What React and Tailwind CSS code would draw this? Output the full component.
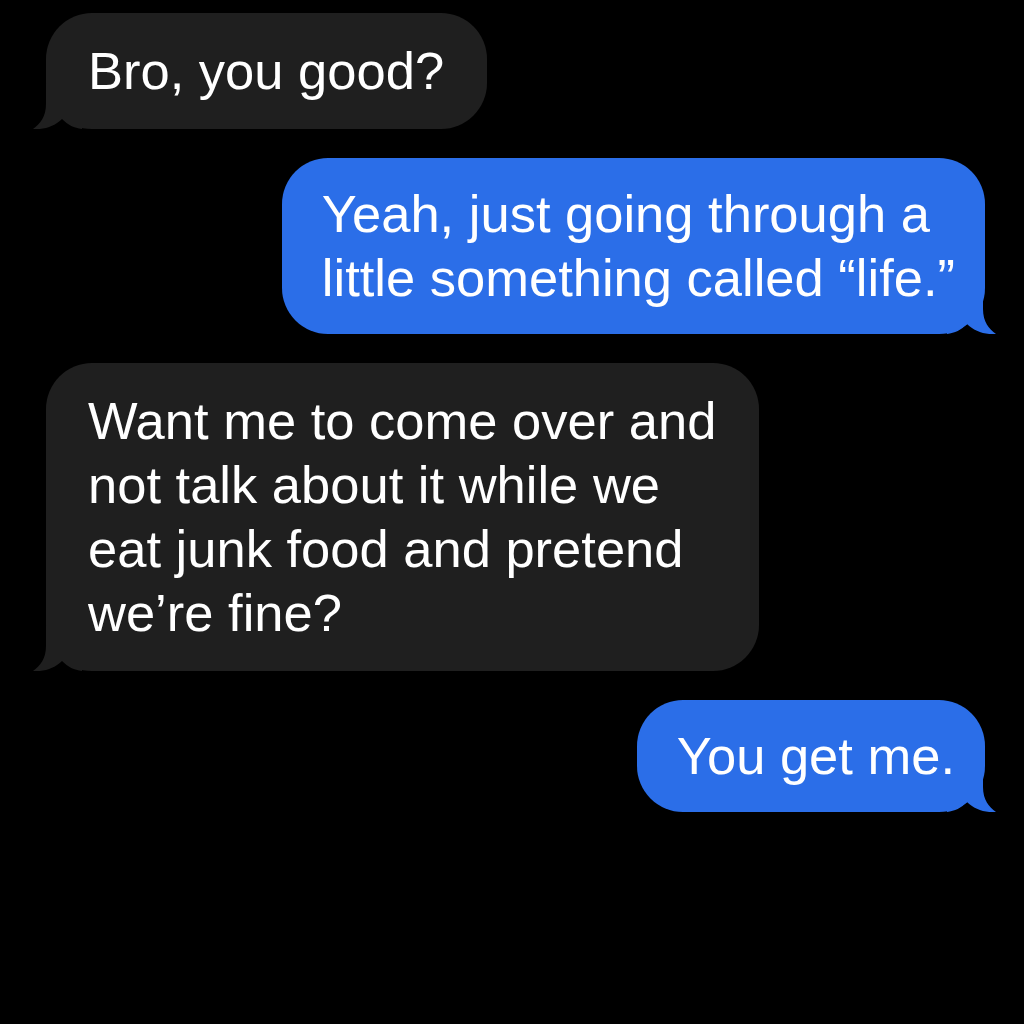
import React from 'react';

// ─── Messages ────────────────────────────────────────────────────────────────

const MESSAGES = [
  { from: 'them', lines: ['Bro, you good?'] },
  { from: 'me', lines: ['Yeah, just going through a', 'little something called \u201Clife.\u201D'] },
  {
    from: 'them',
    lines: [
      'Want me to come over and',
      'not talk about it while we',
      'eat junk food and pretend',
      'we\u2019re fine?',
    ],
  },
  { from: 'me', lines: ['You get me.'] },
];

// ─── Tail ────────────────────────────────────────────────────────────────────

function Tail({ color, mirrored }) {
  return (
    <svg
      width="50"
      height="45"
      viewBox="0 0 50 45"
      className={
        mirrored
          ? 'absolute -right-[12px] bottom-0 -scale-x-100'
          : 'absolute -left-[14px] bottom-0'
      }
    >
      <path
        d="M14 0 L14 20 C14 33 8 40 1 45 C12 46 23 42 30 35 C36 41 42 44 50 45 L50 0 Z"
        fill={color}
      />
    </svg>
  );
}

// ─── Bubble ──────────────────────────────────────────────────────────────────

function Bubble({ from, lines }) {
  const mine = from === 'me';
  return (
    <div className={mine ? 'flex justify-end' : 'flex justify-start'}>
      <div
        className={
          mine
            ? 'relative rounded-[46px] bg-[#2b6ee8] pl-[40px] pr-[30px] py-[24px]'
            : 'relative rounded-[46px] bg-[#1f1f1f] pl-[42px] pr-[43px] py-[26px]'
        }
      >
        <Tail color={mine ? '#2b6ee8' : '#1f1f1f'} mirrored={mine} />
        <p className="relative whitespace-nowrap text-[52.5px] leading-[64px] text-white font-['Liberation_Sans',Arial,sans-serif]">
          {lines.map((line, i) => (
            <React.Fragment key={i}>
              {line}
              {i < lines.length - 1 && <br />}
            </React.Fragment>
          ))}
        </p>
      </div>
    </div>
  );
}

// ─── Page ────────────────────────────────────────────────────────────────────

export default function App() {
  return (
    <div className="min-h-screen w-[1024px] h-[1024px] bg-black overflow-hidden">
      <div className="flex flex-col gap-[29px] pt-[13px] pl-[46px] pr-[39px]">
        {MESSAGES.map((m, i) => (
          <Bubble key={i} {...m} />
        ))}
      </div>
    </div>
  );
}
